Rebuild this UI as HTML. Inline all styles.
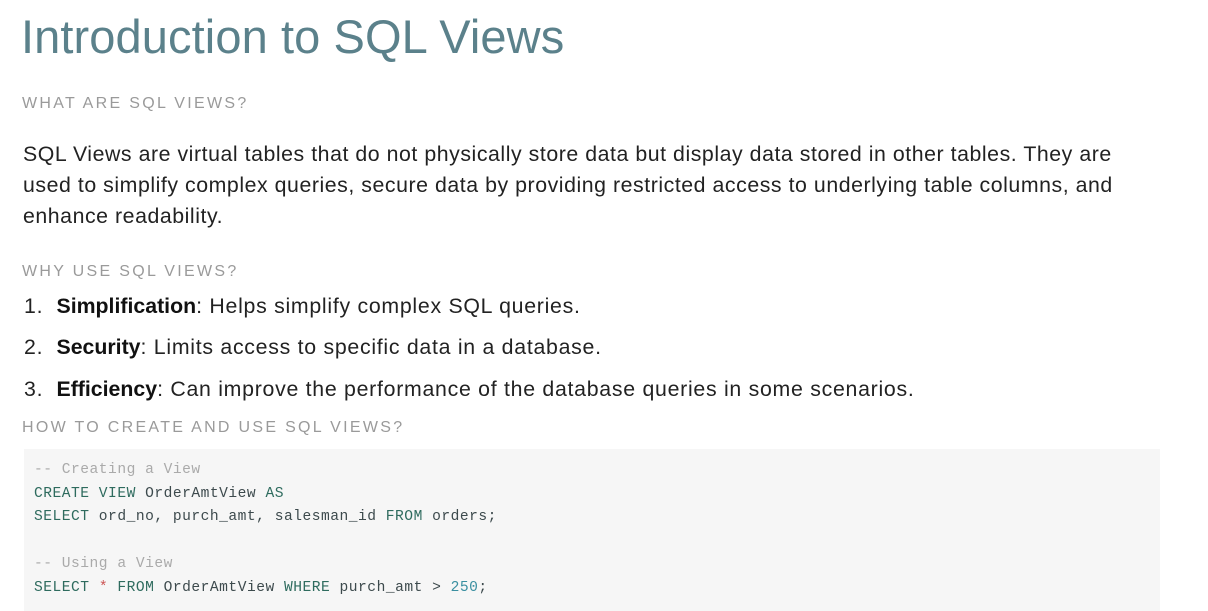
<!DOCTYPE html>
<html style="overflow:hidden"><head><style>
body{margin:0;background:#fff;font-family:"Liberation Sans",sans-serif;width:1208px;height:611px;overflow:hidden;position:relative}
.a{position:absolute;left:22px;white-space:nowrap}
h1{position:absolute;left:21px;top:9px;margin:0;font-weight:normal;font-size:47px;color:#5b818b;letter-spacing:0.1px}
.h{font-size:16px;letter-spacing:2.3px;color:#9a9a9a}
.p{font-size:21.3px;color:#222;line-height:31px;letter-spacing:0.55px}
.l{letter-spacing:0.72px}
b{color:#111;letter-spacing:0}
pre{position:absolute;left:24px;top:449px;width:1126px;height:180px;margin:0;background:#f6f6f6;padding:10px 0 0 10px;font-family:"Liberation Mono",monospace;font-size:14.6px;line-height:23.6px;color:#3d4a4d;letter-spacing:0.5px}
.c{color:#aaa}.k{color:#2e6b5e}.n{color:#3a8fa0}.s{color:#c55}
</style></head><body>
<h1>Introduction to SQL Views</h1>
<div class="a h" style="top:95px">WHAT ARE SQL VIEWS?</div>
<div class="a p" style="top:139px;white-space:normal;width:1130px;left:23px">SQL Views are virtual tables that do not physically store data but display data stored in other tables. They are used to simplify complex queries, secure data by providing restricted access to underlying table columns, and enhance readability.</div>
<div class="a h" style="top:263px">WHY USE SQL VIEWS?</div>
<div class="a p l" style="top:291px;left:24px">1.&nbsp; <b>Simplification</b>: Helps simplify complex SQL queries.</div>
<div class="a p l" style="top:332px;left:24px">2.&nbsp; <b>Security</b>: Limits access to specific data in a database.</div>
<div class="a p l" style="top:374px;left:24px">3.&nbsp; <b>Efficiency</b>: Can improve the performance of the database queries in some scenarios.</div>
<div class="a h" style="top:419px">HOW TO CREATE AND USE SQL VIEWS?</div>
<pre><span class="c">-- Creating a View</span>
<span class="k">CREATE VIEW</span> OrderAmtView <span class="k">AS</span>
<span class="k">SELECT</span> ord_no, purch_amt, salesman_id <span class="k">FROM</span> orders;

<span class="c">-- Using a View</span>
<span class="k">SELECT</span> <span class="s">*</span> <span class="k">FROM</span> OrderAmtView <span class="k">WHERE</span> purch_amt &gt; <span class="n">250</span>;</pre>
</body></html>
